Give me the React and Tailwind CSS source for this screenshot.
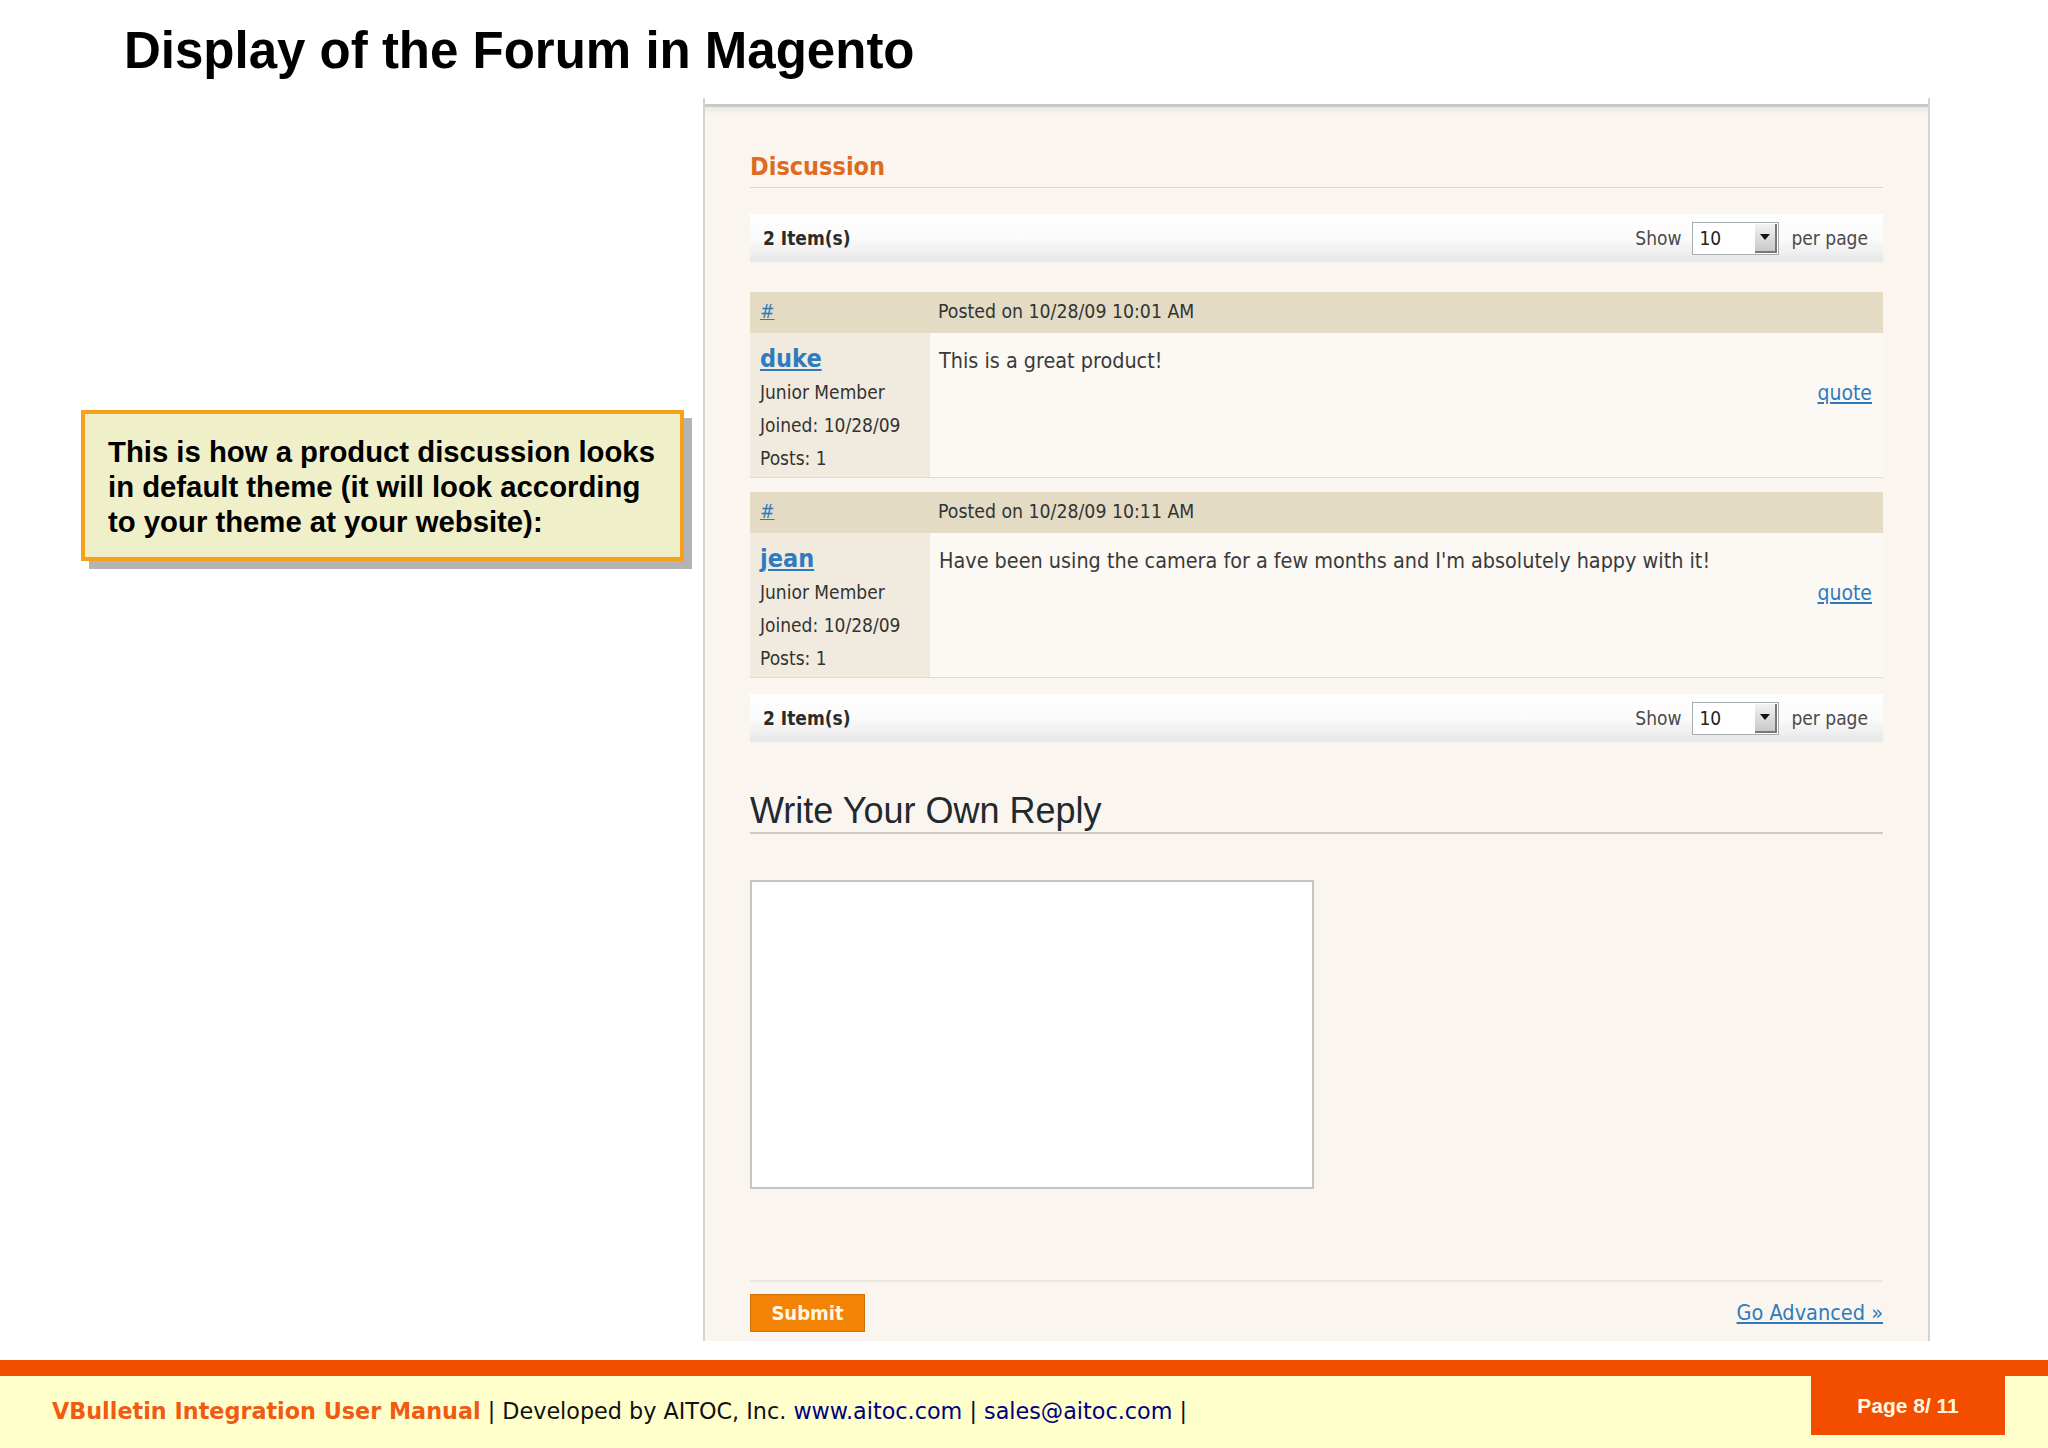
import React from "react";

const forumFont = "font-['DejaVu_Sans_Condensed','DejaVu_Sans',sans-serif]";

const posts = [
  {
    user: "duke",
    posted: "Posted on 10/28/09 10:01 AM",
    text: "This is a great product!",
  },
  {
    user: "jean",
    posted: "Posted on 10/28/09 10:11 AM",
    text: "Have been using the camera for a few months and I'm absolutely happy with it!",
  },
];

const Toolbar = () => (
  <div className="flex h-[48px] items-center justify-between bg-gradient-to-b from-white via-[#fbfbfb] to-[#e7e7e7] pl-[13px] pr-[15px]">
    <span className="text-[19px] font-bold text-[#2b2b2b]">2 Item(s)</span>
    <div className="flex items-center text-[19px] text-[#4a4a4a]">
      <span>Show</span>
      <div className="ml-[11px] flex h-[33px] w-[87px] items-center border border-[#a5acb2] bg-white">
        <span className="flex-1 pl-[6px] text-[19px] text-[#222]">10</span>
        <div className="mr-[1px] flex h-[29px] w-[22px] items-center justify-center border-b-2 border-r-2 border-[#777] bg-gradient-to-b from-[#f2f2f2] to-[#c9c9c9]">
          <svg width="10" height="6" viewBox="0 0 10 6">
            <path d="M0 0 L10 0 L5 6 Z" fill="#111" />
          </svg>
        </div>
      </div>
      <span className="ml-[12px]">per page</span>
    </div>
  </div>
);

const Post = ({ post }) => (
  <div className="flex flex-col border-b border-[#e0dbd1]">
    <div className="flex h-[41px] items-center bg-[#e4dbc5] text-[19.3px] text-[#333]">
      <a className="w-[180px] pl-[10px] text-[#2f7bc0] underline">#</a>
      <span className="pl-[8px]">{post.posted}</span>
    </div>
    <div className="flex h-[144px]">
      <div className="w-[180px] bg-[#f1ebdf] pl-[10px] pt-[11px]">
        <a className="block text-[25px] font-bold leading-[30px] text-[#2f7bc0] underline">{post.user}</a>
        <div className="mt-[2px] text-[19px] leading-[33px] text-[#333]">
          <p>Junior Member</p>
          <p>Joined: 10/28/09</p>
          <p>Posts: 1</p>
        </div>
      </div>
      <div className="flex flex-1 flex-col bg-[#fcf9f4] pl-[9px] pr-[11px] pt-[14px]">
        <p className="text-[21.4px] leading-[28px] text-[#3a3a3a]">{post.text}</p>
        <a className="mt-[4px] self-end text-[21px] leading-[28px] text-[#2f7bc0] underline">quote</a>
      </div>
    </div>
  </div>
);

const ForumPanel = () => (
  <div className={`flex h-[1243px] w-[1227px] flex-col border-x-2 border-[#d6d4d0] ${forumFont}`}>
    <div className="h-[6px] bg-white" />
    <div className="h-[3px] bg-[#c8c8c8]" />
    <div className="flex flex-1 flex-col bg-gradient-to-b from-[#ebe8e3] to-[#faf6ef] to-[8px] px-[45px]">
      <div className="mt-[45px] border-b border-[#ddd6ca] pb-[6px]">
        <h2 className="text-[25px] font-bold leading-[29px] text-[#de6b1f]">Discussion</h2>
      </div>
      <div className="mt-[26px]">
        <Toolbar />
      </div>
      <div className="mt-[30px] flex flex-col gap-[14px]">
        {posts.map((p) => (
          <Post key={p.user} post={p} />
        ))}
      </div>
      <div className="mt-[16px]">
        <Toolbar />
      </div>
      <div className="mt-[48px] border-b-2 border-[#cfcbc4]">
        <h2 className="font-['Liberation_Sans',Arial,sans-serif] text-[36px] leading-[42px] text-[#1f2a30]">
          Write Your Own Reply
        </h2>
      </div>
      <div className="mt-[46px] h-[309px] w-[564px] border-2 border-[#c4c4c4] bg-white" />
      <div className="mt-[91px] h-[2px] bg-[#ece7de]" />
      <div className="mt-[12px] flex items-center justify-between">
        <button className="h-[38px] w-[115px] border border-[#d0700a] bg-[#f28305] text-[20px] font-bold text-[#fff6e6]">
          Submit
        </button>
        <a className="text-[21.5px] text-[#2f7bc0] underline">Go Advanced »</a>
      </div>
    </div>
  </div>
);

export default function App() {
  return (
    <div className="flex h-[1448px] w-[2048px] flex-col overflow-hidden bg-white">
      <div className="h-[98px] pl-[124px] pt-[25px]">
        <h1 className="font-['Liberation_Sans',Arial,sans-serif] text-[51px] font-bold leading-none text-black">
          Display of the Forum in Magento
        </h1>
      </div>
      <div className="flex h-[1262px]">
        <div className="w-[703px] pl-[81px] pt-[312px]">
          <div className="w-[603px] border-4 border-[#f7a11a] bg-[#efefc9] pb-[18px] pl-[23px] pr-[12px] pt-[20px] shadow-[8px_8px_0_#b4b4b4]">
            <p className="font-['Liberation_Sans',Arial,sans-serif] text-[29.3px] font-bold leading-[35px] text-black">
              This is how a product discussion looks
              <br />
              in default theme (it will look according
              <br />
              to your theme at your website):
            </p>
          </div>
        </div>
        <ForumPanel />
      </div>
      <div className="h-[16px] bg-[#f34d00]" />
      <div className="flex flex-1 items-start bg-[#ffffcc]">
        <div className="flex-1 whitespace-nowrap pl-[52px] pt-[19px] font-['DejaVu_Sans',Verdana,sans-serif] text-[22.3px] text-[#111]">
          <span className="font-bold text-[#f05a12]">VBulletin Integration User Manual</span>
          <span> | Developed by AITOC, Inc. </span>
          <span className="text-[#000080]">www.aitoc.com</span>
          <span> | </span>
          <span className="text-[#000080]">sales@aitoc.com</span>
          <span> |</span>
        </div>
        <div className="mr-[43px] flex h-[59px] w-[194px] items-center justify-center bg-[#f34d00] font-['Liberation_Sans',Arial,sans-serif] text-[21px] font-bold text-[#fff8e0]">
          Page 8/ 11
        </div>
      </div>
    </div>
  );
}
